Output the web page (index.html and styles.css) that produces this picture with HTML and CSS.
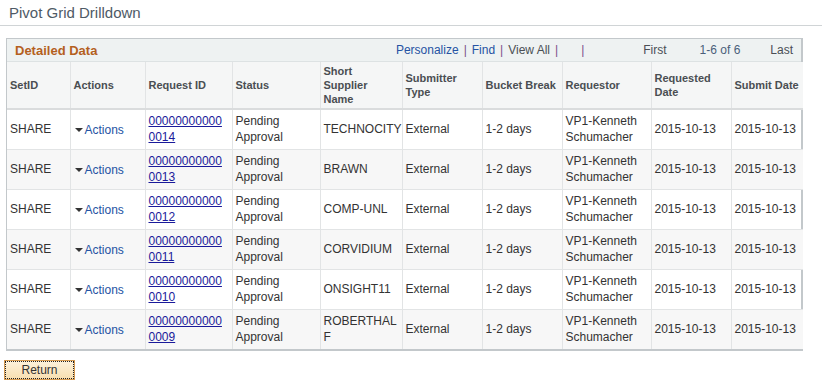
FILE: index.html
```html
<!DOCTYPE html>
<html lang="en">
<head>
    <meta charset="UTF-8">
    <title>Pivot Grid Drilldown</title>
    <link rel="stylesheet" href="styles.css">
</head>
<body>
    <div class="page-title">Pivot Grid Drilldown</div>

    <div class="grid">
        <div class="grid-bar">
            <span class="grid-name">Detailed Data</span>
            <div class="grid-nav">
                <a class="nav-link personalize">Personalize</a><span class="sep">|</span>
                <a class="nav-link find">Find</a><span class="sep">|</span>
                <span class="nav-plain">View All</span><span class="sep">|</span>
                <span class="sep wide">|</span>
                <span class="nav-plain first">First</span>
                <span class="nav-count">1-6 of 6</span>
                <span class="nav-plain last">Last</span>
            </div>
        </div>

        <table class="data">
            <colgroup>
                <col style="width:63px">
                <col style="width:75px">
                <col style="width:87px">
                <col style="width:88px">
                <col style="width:82px">
                <col style="width:80px">
                <col style="width:80px">
                <col style="width:89px">
                <col style="width:80px">
                <col style="width:72px">
            </colgroup>
            <thead>
                <tr>
                    <th>SetID</th>
                    <th>Actions</th>
                    <th>Request ID</th>
                    <th>Status</th>
                    <th>Short Supplier Name</th>
                    <th>Submitter Type</th>
                    <th>Bucket Break</th>
                    <th>Requestor</th>
                    <th>Requested Date</th>
                    <th>Submit Date</th>
                </tr>
            </thead>
            <tbody>
                <tr>
                    <td>SHARE</td>
                    <td><span class="actions"><span class="caret"></span>Actions</span></td>
                    <td><a class="req">00000000000<wbr>0014</a></td>
                    <td>Pending Approval</td>
                    <td>TECHNOCITY</td>
                    <td>External</td>
                    <td>1-2 days</td>
                    <td>VP1-Kenneth Schumacher</td>
                    <td>2015-10-13</td>
                    <td>2015-10-13</td>
                </tr>
                <tr>
                    <td>SHARE</td>
                    <td><span class="actions"><span class="caret"></span>Actions</span></td>
                    <td><a class="req">00000000000<wbr>0013</a></td>
                    <td>Pending Approval</td>
                    <td>BRAWN</td>
                    <td>External</td>
                    <td>1-2 days</td>
                    <td>VP1-Kenneth Schumacher</td>
                    <td>2015-10-13</td>
                    <td>2015-10-13</td>
                </tr>
                <tr>
                    <td>SHARE</td>
                    <td><span class="actions"><span class="caret"></span>Actions</span></td>
                    <td><a class="req">00000000000<wbr>0012</a></td>
                    <td>Pending Approval</td>
                    <td>COMP-UNL</td>
                    <td>External</td>
                    <td>1-2 days</td>
                    <td>VP1-Kenneth Schumacher</td>
                    <td>2015-10-13</td>
                    <td>2015-10-13</td>
                </tr>
                <tr>
                    <td>SHARE</td>
                    <td><span class="actions"><span class="caret"></span>Actions</span></td>
                    <td><a class="req">00000000000<wbr>0011</a></td>
                    <td>Pending Approval</td>
                    <td>CORVIDIUM</td>
                    <td>External</td>
                    <td>1-2 days</td>
                    <td>VP1-Kenneth Schumacher</td>
                    <td>2015-10-13</td>
                    <td>2015-10-13</td>
                </tr>
                <tr>
                    <td>SHARE</td>
                    <td><span class="actions"><span class="caret"></span>Actions</span></td>
                    <td><a class="req">00000000000<wbr>0010</a></td>
                    <td>Pending Approval</td>
                    <td>ONSIGHT11</td>
                    <td>External</td>
                    <td>1-2 days</td>
                    <td>VP1-Kenneth Schumacher</td>
                    <td>2015-10-13</td>
                    <td>2015-10-13</td>
                </tr>
                <tr>
                    <td>SHARE</td>
                    <td><span class="actions"><span class="caret"></span>Actions</span></td>
                    <td><a class="req">00000000000<wbr>0009</a></td>
                    <td>Pending Approval</td>
                    <td>ROBERTHAL F</td>
                    <td>External</td>
                    <td>1-2 days</td>
                    <td>VP1-Kenneth Schumacher</td>
                    <td>2015-10-13</td>
                    <td>2015-10-13</td>
                </tr>
            </tbody>
        </table>
    </div>

    <button class="return-btn">Return</button>
</body>
</html>
```

FILE: styles.css
```css
*{
    margin: 0;
    padding: 0;
    box-sizing: border-box;
}

body{
    font-family: "Liberation Sans", Arial, sans-serif;
    font-size: 12px;
    color: #333;
    background: #fff;
}

.page-title{
    font-size: 15px;
    color: #4e5a66;
    padding: 4px 0 0 9px;
    height: 26px;
    border-bottom: 1px solid #d0d4d6;
}

.grid{
    width: 797px;
    margin: 12px 0 0 6px;
    border: 1px solid #c3c8cb;
    border-bottom-width: 2px;
    border-right-width: 2px;
}

.grid-bar{
    display: flex;
    align-items: center;
    justify-content: space-between;
    height: 23px;
    background: #eef2f2;
    border-bottom: 1px solid #dde2e3;
    padding: 0 8px 0 8px;
}

.grid-name{
    font-size: 13px;
    font-weight: bold;
    color: #b4601e;
}

.grid-nav{
    display: flex;
    align-items: center;
    color: #555;
}

.nav-link{
    color: #2553a3;
}

.nav-plain{
    color: #4a4f55;
}

.sep{
    color: #7a4e8a;
    margin: 0 5px 0 5px;
}

.sep.wide{
    margin-left: 18px;
}

.first{
    margin-left: 54px;
}

.nav-count{
    color: #4a5f7a;
    margin-left: 33px;
}

.last{
    margin-left: 30px;
}

.data{
    width: 796px;
    table-layout: fixed;
    border-collapse: collapse;
}

.data th{
    background: #f5f6f6;
    color: #4a4e52;
    font-size: 11px;
    font-weight: bold;
    text-align: left;
    vertical-align: middle;
    height: 47px;
    padding: 0 3px 0 3px;
    line-height: 14px;
    border-left: 1px solid #e2e4e5;
    border-bottom: 2px solid #dadcdd;
}

.data th:first-child,
.data td:first-child{
    border-left: 0;
}

.data td{
    height: 40px;
    padding: 0 2px 0 3px;
    line-height: 16px;
    vertical-align: middle;
    color: #333;
    border-left: 1px solid #e2e4e5;
    border-top: 1px solid #e2e4e5;
}

.data tbody tr:nth-child(even) td{
    background: #f7f7f7;
}

.actions{
    color: #2553a3;
    display: inline-flex;
    align-items: center;
}

.caret{
    width: 0;
    height: 0;
    border-left: 4px solid transparent;
    border-right: 4px solid transparent;
    border-top: 4px solid #333;
    margin: 0 2px 0 1px;
}

.req{
    color: #1a1a9a;
    text-decoration: underline;
}

.return-btn{
    display: block;
    margin: 9px 0 0 4px;
    width: 71px;
    height: 20px;
    font-family: "Liberation Sans", Arial, sans-serif;
    font-size: 12px;
    color: #333;
    background: linear-gradient(#fdf2dc, #f8dfb0);
    border: 1px solid #d69a50;
    outline: 1px dotted #222;
    outline-offset: -2px;
}
```
